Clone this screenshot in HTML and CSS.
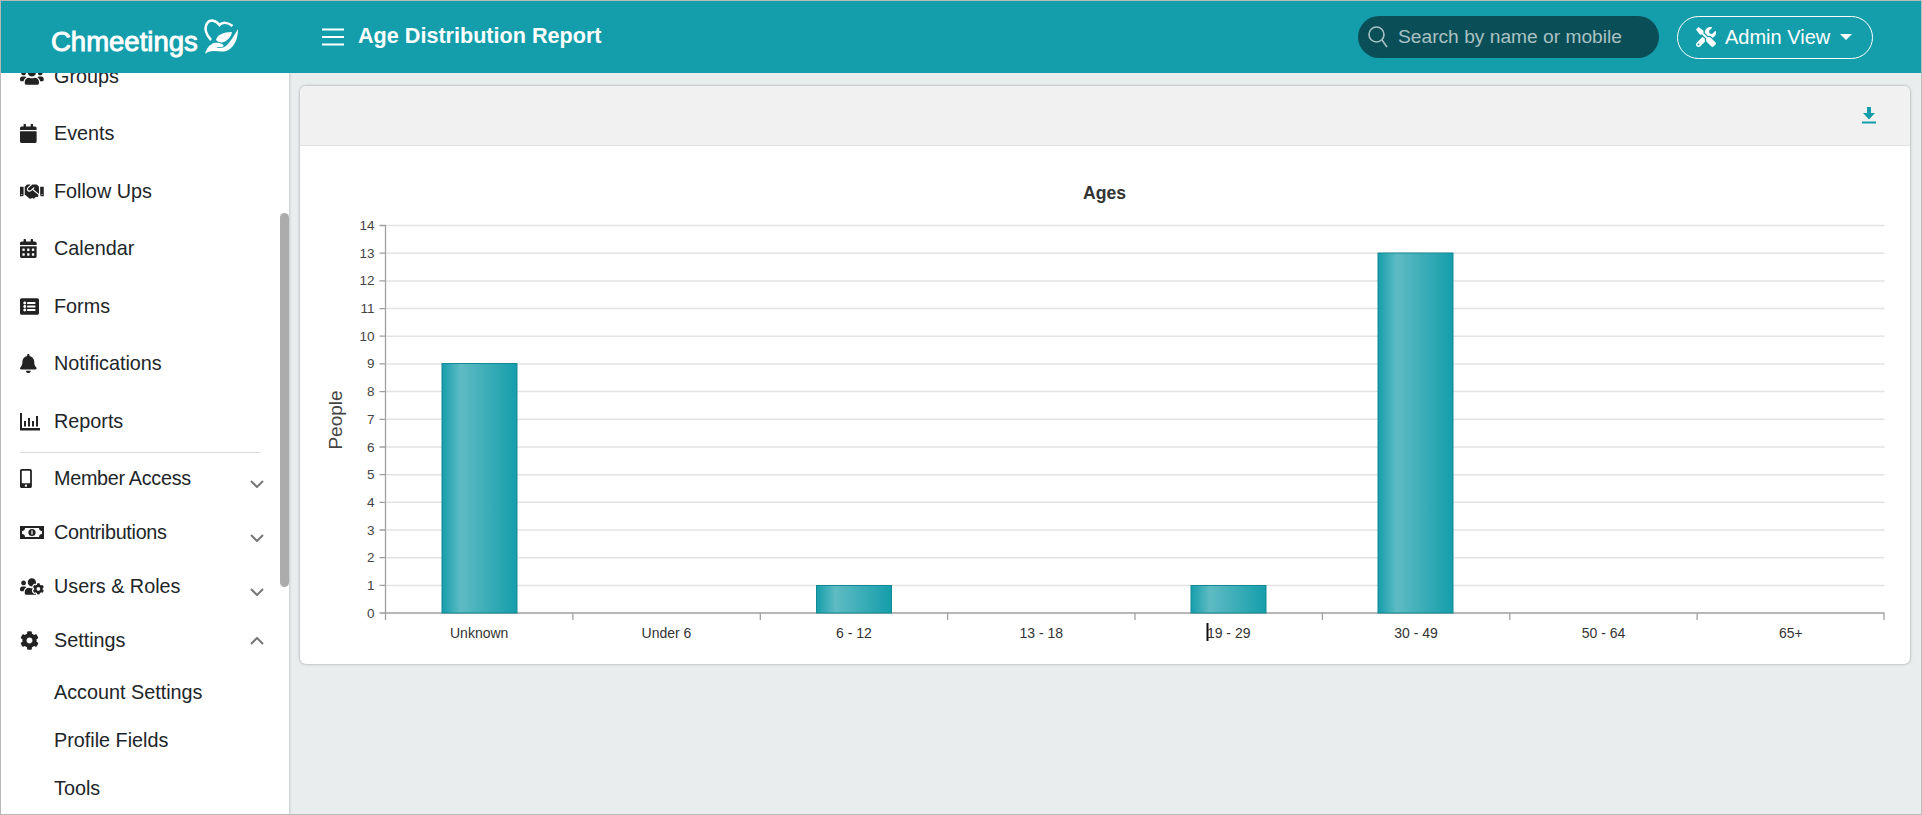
FILE: index.html
```html
<!DOCTYPE html>
<html>
<head>
    <title>Age Distribution Report</title>
    <link rel="stylesheet" href="styles.css">
</head>
<body>
    <div class="page">
        <header class="topbar">
            <div class="brand">
                <span class="brand-name">Chmeetings</span>
                <svg class="brand-mark" viewBox="0 0 34 36">
                    <path class="brand-heart" d="M7 21C2 16 0 9 3 4.500C6 0 12 1 15.500 6C18 3 24 3 28.500 7"/>
                    <path class="brand-hand" d="M1 35C2 31 4 27 8 25C11 23 15 24 18 25C21 26 19 29 16 28L12 28C16 30 20 29 23 26C26 23 30 17 34 10C34 19 31 26 26 30C21 34 15 32 10 32C6 32 3 33 1 35Z"/>
                    <path class="brand-hand" d="M12 21C13 16 19 13 28 13C27 18 24 21 20 23C17 24 14 23 12 21Z"/>
                </svg>
            </div>
            <svg class="menu-icon" viewBox="0 0 22 18">
                <path d="M0 1.5H22M0 9H22M0 16.500H22"/>
            </svg>
            <h1 class="page-title">Age Distribution Report</h1>
            <div class="search-box">
                <svg class="search-icon" viewBox="0 0 20 22">
                    <circle cx="8.500" cy="8.500" r="7.500"/>
                    <path d="M14 14L19 21"/>
                </svg>
                <span class="search-text">Search by name or mobile</span>
            </div>
            <button class="view-button">
                <svg class="tools-icon" viewBox="0 0 512 512"><path d="M501.1 395.7L384 278.6c-23.1-23.1-57.6-27.6-85.4-13.9L192 158.1V96L64 0 0 64l96 128h62.1l106.6 106.6c-13.6 27.8-9.2 62.3 13.9 85.4l117.1 117.1c14.6 14.6 38.2 14.6 52.7 0l52.7-52.7c14.5-14.6 14.5-38.2 0-52.7zM331.7 225c28.3 0 54.9 11 74.9 31l19.4 19.4c15.8-6.9 30.8-16.5 43.8-29.5 37.1-37.1 49.7-89.3 37.9-136.7-2.2-9-13.5-12.1-20.1-5.5l-74.4 74.4-67.9-11.3L334 98.9l74.4-74.4c6.6-6.6 3.4-17.9-5.7-20.2-47.4-11.7-99.6.9-136.6 37.9-28.5 28.5-41.9 66.1-41.2 103.6l82.1 82.1c8.1-1.9 16.5-2.9 24.7-2.9zm-103.9 82l-56.7-56.7L18.7 402.8c-25 25-25 65.5 0 90.5s65.5 25 90.5 0l123.6-123.6c-7.6-19.9-9.9-41.6-5-62.7zM64 472c-13.2 0-24-10.8-24-24 0-13.3 10.7-24 24-24s24 10.7 24 24c0 13.2-10.7 24-24 24z"/></svg>
                <span>Admin View</span>
                <span class="caret"></span>
            </button>
        </header>

        <div class="content-row">
            <aside class="sidebar">
                <ul class="nav-list">
                    <li class="nav-item">
                        <svg class="nav-icon" preserveAspectRatio="xMinYMid meet" viewBox="0 0 640 512"><path d="M96 224c35.3 0 64-28.7 64-64s-28.7-64-64-64-64 28.7-64 64 28.7 64 64 64zm448 0c35.3 0 64-28.7 64-64s-28.7-64-64-64-64 28.7-64 64 28.7 64 64 64zm32 32h-64c-17.6 0-33.5 7.1-45.1 18.6 40.3 22.1 68.9 62 75.1 109.4h66c17.7 0 32-14.3 32-32v-32c0-35.3-28.7-64-64-64zm-256 0c61.9 0 112-50.1 112-112S381.9 32 320 32 208 82.1 208 144s50.1 112 112 112zm76.8 32h-8.3c-20.8 10-43.9 16-68.5 16s-47.6-6-68.5-16h-8.3C179.6 288 128 339.6 128 403.2V432c0 26.5 21.5 48 48 48h288c26.5 0 48-21.5 48-48v-28.8c0-63.6-51.6-115.2-115.2-115.2zm-223.7-13.4C161.5 263.1 145.6 256 128 256H64c-35.3 0-64 28.7-64 64v32c0 17.7 14.3 32 32 32h65.9c6.3-47.4 34.9-87.3 75.2-109.4z"/></svg>
                        <span>Groups</span>
                    </li>
                    <li class="nav-item">
                        <svg class="nav-icon" preserveAspectRatio="xMinYMid meet" viewBox="0 0 448 512"><path d="M12 192h424c6.6 0 12 5.4 12 12v260c0 26.5-21.5 48-48 48H48c-26.5 0-48-21.5-48-48V204c0-6.6 5.4-12 12-12zm436-44v-36c0-26.5-21.5-48-48-48h-48V12c0-6.6-5.4-12-12-12h-40c-6.6 0-12 5.4-12 12v52H160V12c0-6.6-5.4-12-12-12h-40c-6.6 0-12 5.4-12 12v52H48C21.5 64 0 85.500 0 112v36c0 6.600 5.400 12 12 12h424c6.600 0 12-5.400 12-12z"/></svg>
                        <span>Events</span>
                    </li>
                    <li class="nav-item">
                        <svg class="nav-icon" preserveAspectRatio="xMinYMid meet" viewBox="0 0 640 512"><path d="M434.7 64h-85.9c-8 0-15.7 3-21.6 8.4l-98.3 90c-.1.1-.2.3-.3.4-16.6 15.6-16.3 40.5-2.1 56 12.7 13.9 39.4 17.6 56.1 2.7.1-.1.3-.1.4-.2l79.9-73.2c6.5-5.9 16.7-5.5 22.6 1 6 6.5 5.5 16.6-1 22.6l-26.1 23.9L504 313.8c2.9 2.4 5.5 5 7.9 7.7V128l-54.6-54.6c-5.9-6-14.1-9.4-22.6-9.4zM544 128.2v223.9c0 17.7 14.3 32 32 32h64V128.2h-96zm48 223.9c-8.8 0-16-7.2-16-16s7.2-16 16-16 16 7.2 16 16-7.2 16-16 16zM0 384h64c17.7 0 32-14.3 32-32V128.2H0V384zm48-63.9c8.8 0 16 7.2 16 16s-7.2 16-16 16-16-7.2-16-16c0-8.9 7.2-16 16-16zm435.9 18.6L334.6 217.5l-30 27.5c-29.7 27.1-75.2 24.5-101.7-4.4-26.9-29.4-24.8-74.9 4.4-101.7L289.1 64h-83.8c-8.5 0-16.6 3.4-22.6 9.4L128 128v223.9h18.3l90.5 81.9c27.4 22.3 67.7 18.1 90-9.3l.2-.2 17.9 15.5c15.9 13 39.4 10.5 52.3-5.4l31.4-38.6 5.4 4.4c13.7 11.1 33.9 9.1 45-4.7l9.5-11.7c11.2-13.8 9.1-33.9-4.6-45.1z"/></svg>
                        <span>Follow Ups</span>
                    </li>
                    <li class="nav-item">
                        <svg class="nav-icon" preserveAspectRatio="xMinYMid meet" viewBox="0 0 448 512"><path d="M0 464c0 26.5 21.5 48 48 48h352c26.5 0 48-21.5 48-48V192H0v272zm320-196c0-6.6 5.4-12 12-12h40c6.6 0 12 5.4 12 12v40c0 6.6-5.4 12-12 12h-40c-6.6 0-12-5.4-12-12v-40zm0 128c0-6.6 5.4-12 12-12h40c6.6 0 12 5.4 12 12v40c0 6.6-5.4 12-12 12h-40c-6.6 0-12-5.4-12-12v-40zM192 268c0-6.6 5.4-12 12-12h40c6.6 0 12 5.4 12 12v40c0 6.6-5.4 12-12 12h-40c-6.6 0-12-5.4-12-12v-40zm0 128c0-6.6 5.4-12 12-12h40c6.6 0 12 5.4 12 12v40c0 6.6-5.4 12-12 12h-40c-6.6 0-12-5.4-12-12v-40zM64 268c0-6.6 5.4-12 12-12h40c6.6 0 12 5.4 12 12v40c0 6.6-5.4 12-12 12H76c-6.6 0-12-5.4-12-12v-40zm0 128c0-6.6 5.4-12 12-12h40c6.6 0 12 5.4 12 12v40c0 6.6-5.4 12-12 12H76c-6.6 0-12-5.4-12-12v-40zM400 64h-48V16c0-8.8-7.2-16-16-16h-32c-8.8 0-16 7.2-16 16v48H160V16c0-8.8-7.2-16-16-16h-32c-8.8 0-16 7.2-16 16v48H48C21.5 64 0 85.5 0 112v48h448v-48c0-26.5-21.5-48-48-48z"/></svg>
                        <span>Calendar</span>
                    </li>
                    <li class="nav-item">
                        <svg class="nav-icon" preserveAspectRatio="xMinYMid meet" viewBox="0 0 512 512"><path d="M464 480H48c-26.51 0-48-21.49-48-48V80c0-26.51 21.49-48 48-48h416c26.51 0 48 21.49 48 48v352c0 26.51-21.49 48-48 48zM128 120c-22.091 0-40 17.909-40 40s17.909 40 40 40 40-17.909 40-40-17.909-40-40-40zm0 96c-22.091 0-40 17.909-40 40s17.909 40 40 40 40-17.909 40-40-17.909-40-40-40zm0 96c-22.091 0-40 17.909-40 40s17.909 40 40 40 40-17.909 40-40-17.909-40-40-40zm288-136v-32c0-6.627-5.373-12-12-12H204c-6.627 0-12 5.373-12 12v32c0 6.627 5.373 12 12 12h200c6.627 0 12-5.373 12-12zm0 96v-32c0-6.627-5.373-12-12-12H204c-6.627 0-12 5.373-12 12v32c0 6.627 5.373 12 12 12h200c6.627 0 12-5.373 12-12zm0 96v-32c0-6.627-5.373-12-12-12H204c-6.627 0-12 5.373-12 12v32c0 6.627 5.373 12 12 12h200c6.627 0 12-5.373 12-12z"/></svg>
                        <span>Forms</span>
                    </li>
                    <li class="nav-item">
                        <svg class="nav-icon" preserveAspectRatio="xMinYMid meet" viewBox="0 0 448 512"><path d="M224 512c35.32 0 63.97-28.65 63.97-64H160.03c0 35.35 28.65 64 63.97 64zm215.39-149.71c-19.32-20.76-55.47-51.99-55.47-154.29 0-77.7-54.48-139.9-127.94-155.16V32c0-17.67-14.32-32-31.98-32s-31.98 14.33-31.98 32v20.84C118.56 68.1 64.08 130.3 64.08 208c0 102.3-36.15 133.53-55.47 154.29-6 6.45-8.66 14.16-8.61 21.71.11 16.4 12.98 32 32.1 32h383.8c19.12 0 32-15.6 32.1-32 .05-7.55-2.61-15.27-8.61-21.71z"/></svg>
                        <span>Notifications</span>
                    </li>
                    <li class="nav-item">
                        <svg class="nav-icon" preserveAspectRatio="xMinYMid meet" viewBox="0 0 20 19"><path d="M0 1H2V16H20V18.500H0ZM4 9H6V14.500H4ZM8 6H10V14.500H8ZM12 9H14V14.500H12ZM16 4H18V14.500H16Z"/></svg>
                        <span>Reports</span>
                    </li>
                    <li class="nav-divider"></li>
                    <li class="nav-item nav-item-short">
                        <svg class="nav-icon" preserveAspectRatio="xMinYMid meet" viewBox="0 0 320 512"><path d="M272 0H48C21.5 0 0 21.5 0 48v416c0 26.5 21.5 48 48 48h224c26.5 0 48-21.5 48-48V48c0-26.5-21.500-48-48-48zM160 480c-17.700 0-32-14.300-32-32s14.300-32 32-32 32 14.300 32 32-14.300 32-32 32zm112-108c0 6.600-5.400 12-12 12H60c-6.600 0-12-5.400-12-12V60c0-6.600 5.400-12 12-12h200c6.600 0 12 5.400 12 12v312z"/></svg>
                        <span class="nav-label-tight">Member Access</span>
                        <svg class="chevron" viewBox="0 0 14 8"><path d="M1 1L7 7L13 1"/></svg>
                    </li>
                    <li class="nav-item nav-item-short">
                        <svg class="nav-icon" preserveAspectRatio="xMinYMid meet" viewBox="0 0 24 19">
                            <path fill-rule="evenodd" d="M0 3H24V16H0ZM2 5V14H22V5Z"/>
                            <path d="M2 5H5C5 7 4 8 2 8ZM22 5H19C19 7 20 8 22 8ZM2 14H5C5 12 4 11 2 11ZM22 14H19C19 12 20 11 22 11Z"/>
                            <circle cx="12" cy="9.500" r="3.600"/>
                            <rect class="money-mark" x="11.400" y="7.500" width="1.200" height="4"/>
                        </svg>
                        <span class="nav-label-tight">Contributions</span>
                        <svg class="chevron" viewBox="0 0 14 8"><path d="M1 1L7 7L13 1"/></svg>
                    </li>
                    <li class="nav-item nav-item-short">
                        <svg class="nav-icon" preserveAspectRatio="xMinYMid meet" viewBox="0 0 640 512"><path d="M610.5 341.3c2.6-14.1 2.6-28.5 0-42.6l25.8-14.9c3-1.7 4.3-5.2 3.3-8.5-6.7-21.6-18.2-41.2-33.2-57.4-2.3-2.5-6-3.1-9-1.4l-25.8 14.9c-10.9-9.3-23.4-16.5-36.9-21.3v-29.8c0-3.4-2.4-6.4-5.7-7.1-22.3-5-45-4.8-66.2 0-3.3.7-5.7 3.7-5.7 7.1v29.8c-13.5 4.8-26 12-36.9 21.3l-25.8-14.9c-2.9-1.7-6.7-1.1-9 1.4-15 16.2-26.5 35.8-33.2 57.4-1 3.3.4 6.8 3.3 8.5l25.8 14.9c-2.6 14.1-2.6 28.5 0 42.6l-25.8 14.9c-3 1.7-4.3 5.2-3.3 8.5 6.7 21.6 18.2 41.1 33.2 57.4 2.3 2.5 6 3.1 9 1.4l25.8-14.9c10.9 9.3 23.4 16.5 36.9 21.3v29.8c0 3.4 2.4 6.4 5.7 7.1 22.3 5 45 4.8 66.2 0 3.3-.7 5.7-3.7 5.7-7.1v-29.8c13.5-4.8 26-12 36.9-21.3l25.8 14.9c2.9 1.7 6.7 1.1 9-1.4 15-16.2 26.5-35.8 33.2-57.4 1-3.3-.4-6.8-3.3-8.5l-25.8-14.9zM496 368.5c-26.8 0-48.5-21.8-48.5-48.5s21.8-48.5 48.5-48.5 48.5 21.8 48.5 48.5-21.7 48.5-48.5 48.5zM96 224c35.3 0 64-28.7 64-64s-28.7-64-64-64-64 28.7-64 64 28.7 64 64 64zm224 32c1.9 0 3.7-.5 5.6-.6 8.3-21.7 20.5-42.1 36.3-59.2 7.4-8 17.9-12.6 28.9-12.6 6.9 0 13.7 1.8 19.6 5.3l7.9 4.6c.8-.5 1.6-.9 2.4-1.4 7-14.6 11.2-30.8 11.2-48 0-61.9-50.1-112-112-112S208 82.1 208 144c0 61.9 50.1 112 112 112zm105.2 194.5c-2.3-1.2-4.6-2.6-6.8-3.9-8.2 4.8-15.3 9.8-27.5 9.8-10.9 0-21.4-4.6-28.9-12.6-18.3-19.8-32.3-43.9-40.2-69.6-10.7-34.5 24.9-49.7 25.8-50.3-.1-2.6-.1-5.2 0-7.8l-7.9-4.6c-3.8-2.2-7-5-9.8-8.1-3.3.2-6.5.6-9.8.6-24.6 0-47.6-6-68.5-16h-8.3C179.6 288 128 339.6 128 403.2V432c0 26.5 21.5 48 48 48h255.4c-3.7-6-6.2-12.8-6.2-20.3v-9.2zM173.1 274.6C161.5 263.1 145.6 256 128 256H64c-35.3 0-64 28.7-64 64v32c0 17.7 14.3 32 32 32h65.9c6.3-47.4 34.9-87.3 75.2-109.4z"/></svg>
                        <span>Users &amp; Roles</span>
                        <svg class="chevron" viewBox="0 0 14 8"><path d="M1 1L7 7L13 1"/></svg>
                    </li>
                    <li class="nav-item nav-item-short">
                        <svg class="nav-icon" preserveAspectRatio="xMinYMid meet" viewBox="0 0 512 512"><path d="M487.4 315.7l-42.6-24.6c4.3-23.2 4.3-47 0-70.2l42.6-24.6c4.9-2.8 7.1-8.6 5.5-14-11.1-35.6-30-67.8-54.7-94.6-3.8-4.1-10-5.1-14.8-2.3L380.8 110c-17.9-15.4-38.5-27.3-60.8-35.1V25.8c0-5.6-3.9-10.5-9.4-11.7-36.7-8.2-74.3-7.8-109.2 0-5.5 1.2-9.4 6.1-9.4 11.7V75c-22.2 7.9-42.8 19.8-60.8 35.1L88.7 85.5c-4.9-2.8-11-1.9-14.8 2.3-24.7 26.7-43.6 58.9-54.7 94.6-1.7 5.4.6 11.2 5.5 14L67.3 221c-4.3 23.2-4.3 47 0 70.2l-42.6 24.6c-4.9 2.8-7.1 8.6-5.5 14 11.1 35.6 30 67.8 54.7 94.6 3.8 4.1 10 5.1 14.8 2.3l42.6-24.6c17.9 15.4 38.5 27.3 60.8 35.1v49.2c0 5.6 3.9 10.5 9.4 11.7 36.7 8.2 74.3 7.8 109.2 0 5.5-1.2 9.4-6.1 9.4-11.7v-49.2c22.2-7.9 42.8-19.8 60.8-35.1l42.6 24.6c4.9 2.8 11 1.9 14.8-2.3 24.7-26.7 43.6-58.9 54.7-94.6 1.5-5.5-.7-11.3-5.6-14.1zM256 336c-44.1 0-80-35.9-80-80s35.9-80 80-80 80 35.9 80 80-35.9 80-80 80z"/></svg>
                        <span>Settings</span>
                        <svg class="chevron chevron-up" viewBox="0 0 14 8"><path d="M1 1L7 7L13 1"/></svg>
                    </li>
                    <li class="sub-item">Account Settings</li>
                    <li class="sub-item">Profile Fields</li>
                    <li class="sub-item">Tools</li>
                </ul>
                <div class="scroll-thumb"></div>
            </aside>

            <main class="main">
                <section class="card">
                    <div class="card-head">
                        <svg class="download-icon" viewBox="0 0 14 17"><path d="M5 0H9V6H13L7 12.500L1 6H5ZM0 14.500H14V16.500H0Z"/></svg>
                    </div>
                    <svg class="chart" viewBox="300 146 1609 518">
                        <defs>
                            <linearGradient id="barFill" x1="0" y1="0" x2="1" y2="0">
                                <stop offset="0" stop-color="#149eab"/>
                                <stop offset="0.25" stop-color="#5fbbc3"/>
                                <stop offset="1" stop-color="#149eab"/>
                            </linearGradient>
                        </defs>

                        <text class="chart-title" x="1104" y="199">Ages</text>
                        <text class="axis-title" transform="translate(341 420) rotate(-90)">People</text>

                        <!-- grid lines, one per person -->
                        <g class="grid">
                            <path d="M385 225.500H1884M385 253.200H1884M385 280.900H1884M385 308.600H1884M385 336.200H1884M385 363.900H1884M385 391.600H1884M385 419.300H1884M385 447H1884M385 474.700H1884M385 502.300H1884M385 530H1884M385 557.700H1884M385 585.400H1884"/>
                        </g>
                        <g class="axis">
                            <path d="M385 225V613M379 225.500H385M379 253.200H385M379 280.900H385M379 308.600H385M379 336.200H385M379 363.900H385M379 391.600H385M379 419.300H385M379 447H385M379 474.700H385M379 502.300H385M379 530H385M379 557.700H385M379 585.400H385M379 613H385"/>
                            <path d="M385 613H1884M385 613V620M572.400 613V620M759.800 613V620M947.100 613V620M1134.500 613V620M1321.900 613V620M1509.300 613V620M1696.600 613V620M1883.500 613V620"/>
                        </g>

                        <g class="y-labels">
                            <text x="374" y="230">14</text>
                            <text x="374" y="258">13</text>
                            <text x="374" y="285">12</text>
                            <text x="374" y="313">11</text>
                            <text x="374" y="341">10</text>
                            <text x="374" y="368">9</text>
                            <text x="374" y="396">8</text>
                            <text x="374" y="424">7</text>
                            <text x="374" y="452">6</text>
                            <text x="374" y="479">5</text>
                            <text x="374" y="507">4</text>
                            <text x="374" y="535">3</text>
                            <text x="374" y="562">2</text>
                            <text x="374" y="590">1</text>
                            <text x="374" y="618">0</text>
                        </g>

                        <g class="bars">
                            <rect x="441.500" y="363.500" width="75" height="249.500"/>
                            <rect x="816" y="585.500" width="75" height="27.500"/>
                            <rect x="1190.500" y="585.500" width="75" height="27.500"/>
                            <rect x="1377.500" y="253" width="75" height="360"/>
                        </g>

                        <g class="x-labels">
                            <text x="478.700" y="638">Unknown</text>
                            <text x="666" y="638">Under 6</text>
                            <text x="853.500" y="638">6 - 12</text>
                            <text x="1040.800" y="638">13 - 18</text>
                            <text x="1228.200" y="638">19 - 29</text>
                            <text x="1415.600" y="638">30 - 49</text>
                            <text x="1603" y="638">50 - 64</text>
                            <text x="1790.300" y="638">65+</text>
                        </g>

                        <!-- text cursor caught in the screenshot -->
                        <rect class="text-cursor" x="1206" y="623" width="2" height="18"/>
                    </svg>
                </section>
            </main>
        </div>
    </div>
</body>
</html>
```

FILE: styles.css
```css
* {
    box-sizing: border-box;
}
body {
    margin: 0;
    font-family: "Liberation Sans", Arial, sans-serif;
    color: #212529;
}
.page {
    width: 1922px;
    height: 815px;
    border: 1px solid #b9b9b9;
    display: flex;
    flex-direction: column;
    overflow: hidden;
    background-color: #e9edee;
}

/* top bar */
.topbar {
    flex: none;
    height: 72px;
    background-color: #149eab;
    display: flex;
    align-items: center;
    padding-right: 48px;
    color: #fff;
    position: relative;
    z-index: 2;
}
.brand {
    width: 321px;
    padding-left: 50px;
    display: flex;
    align-items: center;
    gap: 6px;
}
.brand-name {
    font-size: 27.500px;
    -webkit-text-stroke: 0.9px #fff;
    padding-top: 9px;
}
.brand-mark {
    width: 34px;
    height: 36px;
    margin-top: -1px;
}
.brand-heart {
    fill: none;
    stroke: #fff;
    stroke-width: 2.5;
}
.brand-hand {
    fill: #fff;
}
.menu-icon {
    width: 22px;
    height: 18px;
    margin-right: 14px;
    fill: none;
    stroke: #fff;
    stroke-width: 2;
}
.page-title {
    margin: -2px 0 0;
    font-size: 21.6px;
    font-weight: bold;
}
.search-box {
    margin-left: auto;
    width: 301px;
    height: 42px;
    border-radius: 21px;
    background-color: #0a4f57;
    display: flex;
    align-items: center;
    padding-left: 10px;
    gap: 10px;
}
.search-icon {
    width: 20px;
    height: 22px;
    fill: none;
    stroke: #a9c1c3;
    stroke-width: 1.6;
}
.search-text {
    font-size: 19.2px;
    color: #a9c1c3;
}
.view-button {
    margin-left: 18px;
    width: 196px;
    height: 43px;
    border: 1px solid #fff;
    border-radius: 22px;
    background: none;
    color: #fff;
    font-family: inherit;
    font-size: 20px;
    display: flex;
    align-items: center;
    padding: 0 0 0 18px;
}
.tools-icon {
    width: 20px;
    height: 20px;
    fill: #fff;
    margin-right: 9px;
}
.caret {
    margin-left: 10px;
    border-left: 6px solid transparent;
    border-right: 6px solid transparent;
    border-top: 6.500px solid #fff;
}

/* sidebar */
.content-row {
    flex: 1;
    display: flex;
    min-height: 0;
}
.sidebar {
    flex: none;
    width: 288px;
    background-color: #fff;
    position: relative;
    overflow: hidden;
    box-shadow: 1px 0 2px rgba(0,0,0,0.15);
}
.nav-list {
    list-style: none;
    margin: -25.500px 0 0;
    padding: 0 0 0 19px;
    font-size: 19.800px;
}
.nav-item {
    height: 57.500px;
    display: flex;
    align-items: center;
}
.nav-item-short {
    height: 54px;
}
.nav-label-tight {
    letter-spacing: -0.3px;
}
.nav-icon {
    width: 34px;
    height: 19px;
    flex: none;
    fill: #222;
}
.money-mark {
    fill: #fff;
}
.chevron {
    width: 14px;
    height: 8px;
    margin-left: auto;
    margin-right: 25px;
    margin-top: 10px;
    fill: none;
    stroke: #777;
    stroke-width: 2;
}
.chevron-up {
    transform: rotate(180deg);
    margin-top: 0;
}
.nav-divider {
    height: 1px;
    width: 241px;
    background-color: #ddd;
    margin: 2px 0 -1.500px;
}
.sub-item {
    height: 48px;
    padding-left: 34px;
    display: flex;
    align-items: center;
    position: relative;
    top: 1px;
}
.scroll-thumb {
    position: absolute;
    left: 279px;
    top: 140px;
    width: 9px;
    height: 374px;
    border-radius: 5px;
    background-color: #acacac;
}

/* report card */
.main {
    flex: 1;
    padding: 13px 11px 0 11px;
}
.card {
    background-color: #fff;
    border-radius: 6px;
    box-shadow: 0 0 3px rgba(0,0,0,0.35);
    overflow: hidden;
}
.card-head {
    height: 60px;
    background-color: #f1f1f1;
    border-bottom: 1px solid #e2e2e2;
    display: flex;
    align-items: center;
    justify-content: flex-end;
    padding: 0 34px 0 0;
}
.download-icon {
    width: 14px;
    height: 17px;
    fill: #149eab;
}
.chart {
    display: block;
    width: 100%;
    height: 518px;
}
.chart-title {
    font-size: 17.600px;
    font-weight: bold;
    text-anchor: middle;
    fill: #333;
}
.axis-title {
    font-size: 19px;
    text-anchor: middle;
    fill: #444;
}
.grid path {
    fill: none;
    stroke: #e3e3e3;
    stroke-width: 1.500;
}
.axis path {
    fill: none;
    stroke: #a0a0a0;
    stroke-width: 1.300;
}
.y-labels text {
    font-size: 13.500px;
    text-anchor: end;
    fill: #444;
}
.x-labels text {
    font-size: 14px;
    text-anchor: middle;
    fill: #333;
}
.bars rect {
    fill: url(#barFill);
    stroke: #128995;
    stroke-width: 1;
}
.text-cursor {
    fill: #111;
}
```
